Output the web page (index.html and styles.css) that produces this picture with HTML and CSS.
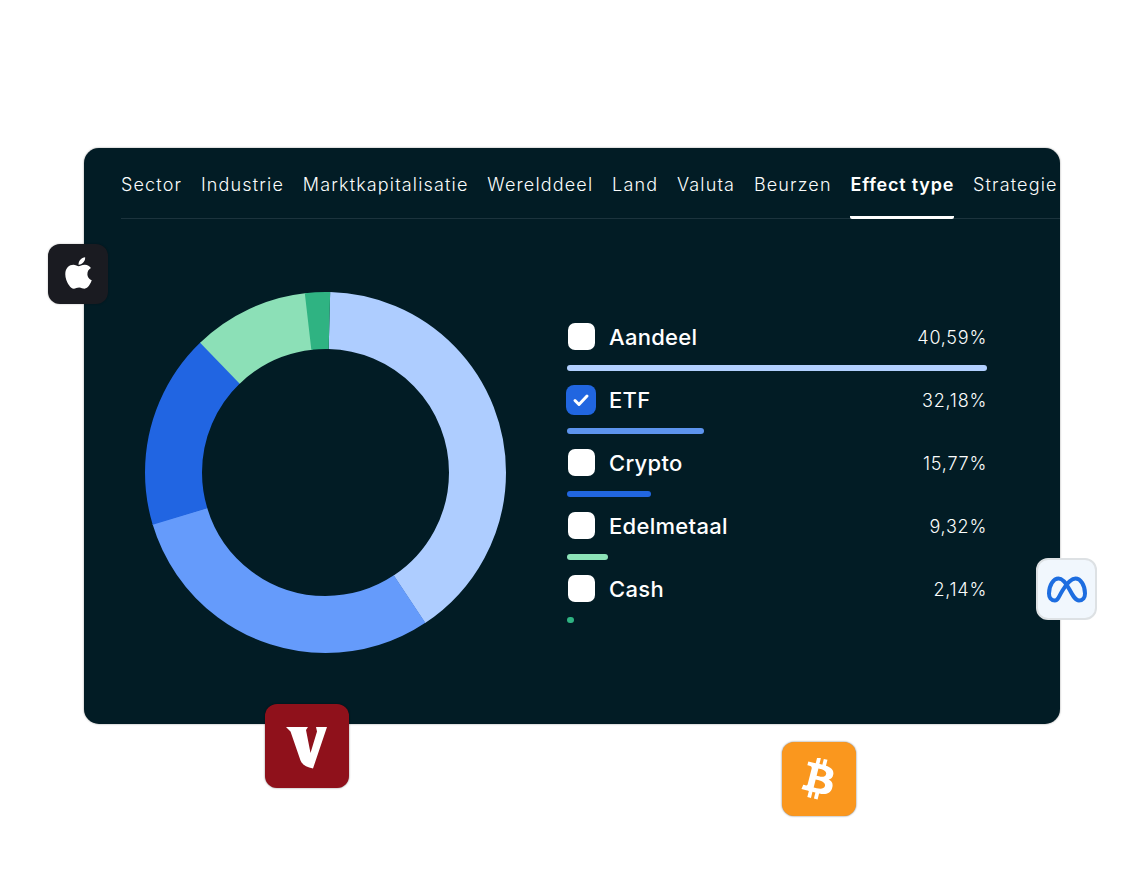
FILE: index.html
```html
<!DOCTYPE html>
<html lang="nl">
<head>
<meta charset="utf-8">
<title>Effect type</title>
<link rel="stylesheet" href="styles.css">
</head>
<body>
<main class="page">
  <section class="card">
    <nav class="tabs">
      <span class="tab">Sector</span>
      <span class="tab">Industrie</span>
      <span class="tab">Marktkapitalisatie</span>
      <span class="tab">Werelddeel</span>
      <span class="tab">Land</span>
      <span class="tab">Valuta</span>
      <span class="tab">Beurzen</span>
      <span class="tab tab-active">Effect type</span>
      <span class="tab">Strategie</span>
    </nav>
    <div class="content">
      <svg class="donut" viewBox="0 0 361 361" width="361" height="361" aria-hidden="true">
        <g fill="none" stroke-width="57" transform="rotate(-90 180.5 180.5)">
          <circle cx="180.5" cy="180.5" r="152" pathLength="360" stroke="#aecdff" stroke-dasharray="145 215" stroke-dashoffset="-1.5"/>
          <circle cx="180.5" cy="180.5" r="152" pathLength="360" stroke="#659bfb" stroke-dasharray="107 253" stroke-dashoffset="-146.4"/>
          <circle cx="180.5" cy="180.5" r="152" pathLength="360" stroke="#2165e2" stroke-dasharray="63 297" stroke-dashoffset="-253.2"/>
          <circle cx="180.5" cy="180.5" r="152" pathLength="360" stroke="#8ce0b7" stroke-dasharray="38 322" stroke-dashoffset="-316"/>
          <circle cx="180.5" cy="180.5" r="152" pathLength="360" stroke="#2fb382" stroke-dasharray="8.1 351.9" stroke-dashoffset="-353.4"/>
        </g>
      </svg>
      <ul class="legend">
        <li class="item">
          <div class="row"><span class="check"></span><span class="label">Aandeel</span><span class="pct">40,59%</span></div>
          <div class="bar bar-a"></div>
        </li>
        <li class="item">
          <div class="row"><span class="check check-on"><svg viewBox="0 0 30 30" width="30" height="30" aria-hidden="true"><path d="M9 15.500l4 4 8-8.500" fill="none" stroke="#fff" stroke-width="3" stroke-linecap="round" stroke-linejoin="round"/></svg></span><span class="label">ETF</span><span class="pct">32,18%</span></div>
          <div class="bar bar-b"></div>
        </li>
        <li class="item">
          <div class="row"><span class="check"></span><span class="label">Crypto</span><span class="pct">15,77%</span></div>
          <div class="bar bar-c"></div>
        </li>
        <li class="item">
          <div class="row"><span class="check"></span><span class="label">Edelmetaal</span><span class="pct">9,32%</span></div>
          <div class="bar bar-d"></div>
        </li>
        <li class="item">
          <div class="row"><span class="check"></span><span class="label">Cash</span><span class="pct">2,14%</span></div>
          <div class="bar bar-e"></div>
        </li>
      </ul>
    </div>
  </section>

  <div class="badge badge-apple">
    <svg viewBox="0 0 384 512" width="29" height="36" aria-hidden="true"><path fill="#fff" d="M318.7 268.7c-.2-36.7 16.4-64.4 50-84.8-18.8-26.9-47.2-41.7-84.7-44.6-35.5-2.8-74.3 20.7-88.5 20.7-15 0-49.4-19.7-76.4-19.7C63.3 141.2 4 184.8 4 273.5q0 39.3 14.4 81.2c12.8 36.7 59 126.7 107.2 125.2 25.2-.6 43-17.9 75.8-17.9 31.8 0 48.3 17.9 76.4 17.9 48.6-.7 90.4-82.5 102.6-119.3-65.2-30.7-61.7-90-61.7-91.9zm-56.6-164.2c27.3-32.4 24.8-61.9 24-72.5-24.1 1.4-52 16.4-67.9 34.9-17.5 19.8-27.8 44.3-25.6 71.9 26.1 2 49.9-11.4 69.5-34.3z"/></svg>
  </div>
  <div class="badge badge-meta">
    <svg viewBox="0 0 40 27" width="40" height="27" aria-hidden="true"><path fill="none" stroke="#1d6de0" stroke-width="4" stroke-linejoin="round" d="M8 24.500C4 24.500 2 21.500 2 17.500 2 9 6.500 2.500 11.500 2.500 15.500 2.500 18.500 6 22.500 13.500 26.500 21 28.500 24.500 32 24.500 36 24.500 38 21.500 38 17.500 38 9 33.500 2.500 28.500 2.500 23.500 2.500 19.500 8 15.500 14.500 11.500 21 11 24.500 8 24.500Z"/></svg>
  </div>
  <div class="badge badge-vanguard">
    <svg viewBox="0 0 42 42" width="42" height="42" aria-hidden="true"><path fill="#fff" d="M0 0H22L20 3 24.500 26 31 4.500 30 0H41L27 41.500C21 40.500 16.500 38 14.500 33.500L4.500 4.500Z"/></svg>
  </div>
  <div class="badge badge-bitcoin">
    <svg viewBox="100 100 312 312" width="42" height="42" aria-hidden="true"><path fill="#fff" fill-rule="evenodd" d="M362.349 220.67c4.937-32.999-20.191-50.739-54.55-62.573l11.146-44.702-27.213-6.781-10.851 43.524c-7.154-1.783-14.502-3.464-21.803-5.13l10.929-43.81-27.198-6.781-11.153 44.686c-5.922-1.349-11.735-2.682-17.377-4.084l.031-.14-37.53-9.37-7.239 29.062s20.191 4.627 19.765 4.913c11.022 2.751 13.014 10.044 12.68 15.825l-12.696 50.925c.76.194 1.744.473 2.829.907-.907-.225-1.876-.473-2.876-.713l-17.796 71.338c-1.349 3.348-4.767 8.37-12.471 6.464.271.395-19.78-4.937-19.78-4.937l-13.51 31.147 35.414 8.827c6.588 1.651 13.045 3.379 19.4 5.006l-11.262 45.213 27.182 6.781 11.153-44.733a1038.209 1038.209 0 0 0 21.687 5.627l-11.115 44.523 27.213 6.781 11.262-45.128c46.404 8.781 81.299 5.239 95.986-36.727 11.836-33.79-.589-53.281-25.004-65.991 17.78-4.098 31.174-15.792 34.747-39.949zm-62.177 87.179c-8.41 33.79-65.308 15.523-83.755 10.943l14.944-59.899c18.446 4.603 77.6 13.717 68.811 48.956zm8.417-87.667c-7.673 30.736-55.031 15.12-70.393 11.292l13.548-54.327c15.363 3.828 64.836 10.973 56.845 43.035z"/></svg>
  </div>
</main>
</body>
</html>
```

FILE: styles.css
```css
* { box-sizing: border-box; }

html, body {
  margin: 0;
  background: #fff;
}

body {
  font-family: Inter, "Liberation Sans", sans-serif;
  color: #fff;
}

.page {
  position: relative;
  width: 1144px;
  height: 872px;
  padding: 148px 84px 0;
  overflow: hidden;
}

.card {
  width: 976px;
  height: 576px;
  padding-left: 37px;
  background: #021c25;
  border-radius: 15px;
  box-shadow: 0 0 2px rgba(0, 0, 0, .45);
  overflow: hidden;
}

.tabs {
  display: flex;
  gap: 18.8px;
  height: 71px;
  border-bottom: 1px solid #1c333d;
  white-space: nowrap;
}

.tab {
  height: 71px;
  padding-top: 25px;
  font-size: 18px;
  font-weight: 300;
  line-height: 23px;
  letter-spacing: 1.15px;
  color: #fbfcfc;
}

.tab-active {
  font-weight: 600;
  letter-spacing: .8px;
  color: #fff;
  border-bottom: 3px solid #fff;
  border-radius: 0 0 2px 2px;
}

.content {
  display: flex;
  align-items: flex-start;
  padding-left: 24px;
}

.donut {
  display: block;
  flex: none;
  margin-top: 73px;
}

.legend {
  width: 420px;
  margin: 104px 0 0 61px;
  padding: 0;
  list-style: none;
}

.item {
  height: 63px;
}

.row {
  display: flex;
  align-items: center;
  gap: 14px;
  height: 27px;
  padding-left: 1px;
}

.check {
  flex: none;
  width: 27px;
  height: 27px;
  background: #fff;
  border-radius: 7px;
}

.check-on {
  width: 30px;
  height: 30px;
  margin: -1px -1px -2px -2px;
  background: #2166e0;
  border-radius: 8px;
}

.check-on svg {
  display: block;
}

.label {
  margin-top: 2px;
  font-size: 22px;
  font-weight: 500;
  line-height: 27px;
  letter-spacing: .3px;
}

.pct {
  margin-top: 2px;
  margin-left: auto;
  font-size: 18px;
  font-weight: 300;
  line-height: 27px;
  letter-spacing: .75px;
  color: #fbfcfc;
}

.bar {
  height: 6px;
  margin-top: 15px;
  border-radius: 3px;
}

.bar-a { width: 420px; background: #b2d0ff; }
.bar-b { width: 137px; background: #5d94ee; }
.bar-c { width: 84px; background: #2166e0; }
.bar-d { width: 41px; background: #8ce3b8; }
.bar-e { width: 7px; background: #2fb382; }

.badge {
  position: absolute;
  display: flex;
  align-items: center;
  justify-content: center;
  border-radius: 12px;
}

.badge-apple {
  left: 48px;
  top: 244px;
  width: 60px;
  height: 60px;
  background: #1a1b21;
  box-shadow: 0 0 2px rgba(0, 0, 0, .3);
}

.badge-apple svg {
  margin-bottom: 2px;
}

.badge-meta {
  left: 1036px;
  top: 558px;
  width: 61px;
  height: 62px;
  background: #f1f7fd;
  border: 2px solid #dde1e4;
}

.badge-vanguard {
  left: 265px;
  top: 704px;
  width: 84px;
  height: 84px;
  background: #8f111b;
  box-shadow: 0 0 2px rgba(0, 0, 0, .5);
}

.badge-vanguard svg {
  margin: 4px 1px 0 0;
}

.badge-bitcoin {
  left: 782px;
  top: 742px;
  width: 74px;
  height: 74px;
  background: #fa971e;
  box-shadow: 0 0 2px rgba(0, 0, 0, .6);
}
```
